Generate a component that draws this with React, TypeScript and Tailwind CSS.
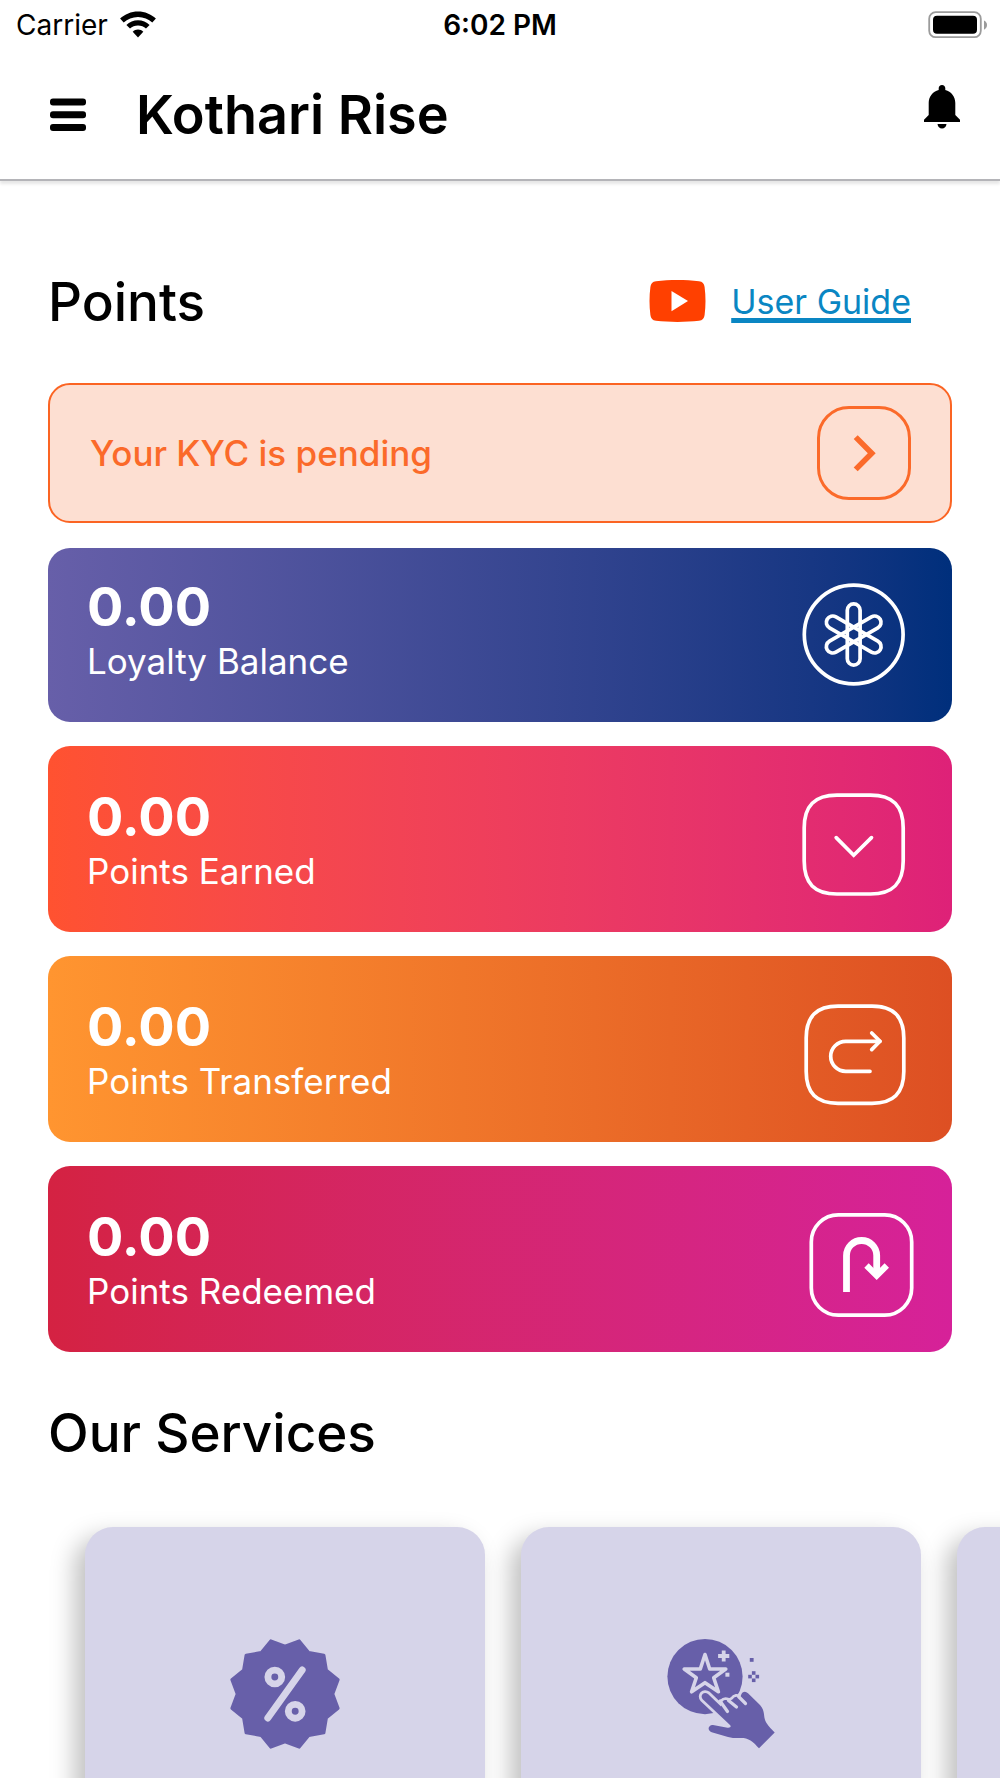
import type { ReactNode } from 'react';

interface PointsCardProps {
  value: string;
  label: string;
  className: string;
  icon: ReactNode;
}

function WifiIcon() {
  return (
    <svg width="36" height="28" viewBox="0 0 36 28" aria-hidden="true">
      <path d="M18 0.4C24.900 0.400 31.200 3.100 35.900 7.600L32.300 11.500C28.500 8 23.500 5.900 18 5.900S7.500 8 3.700 11.500L0.100 7.600C4.800 3.100 11.100 0.400 18 0.400Z" />
      <path d="M18 9.300C22.500 9.300 26.500 11 29.600 13.900L26 17.600C23.900 15.700 21.100 14.600 18 14.600S12.100 15.700 10 17.600L6.400 13.900C9.500 11 13.500 9.300 18 9.300Z" />
      <path d="M18 18.600C20 18.600 21.900 19.400 23.300 20.700L18 26.500L12.700 20.700C14.100 19.400 16 18.600 18 18.600Z" />
    </svg>
  );
}

function BatteryIcon() {
  return (
    <svg width="56" height="28" viewBox="0 0 56 28" className="overflow-visible" aria-hidden="true">
      <rect x="1.200" y="1.200" width="51.600" height="25" rx="6.500" fill="none" stroke="#9b9b9b" strokeWidth="1.800" />
      <rect x="5" y="4.800" width="44" height="18" rx="4" />
      <path d="M56 9.500C58 10.500 59 12 59 14S58 17.500 56 18.700Z" fill="#9b9b9b" />
    </svg>
  );
}

function MenuIcon() {
  return (
    <svg width="36" height="34" viewBox="0 0 36 34" aria-hidden="true">
      <rect y="0.500" width="36" height="7" rx="3" />
      <rect y="13.200" width="36" height="7" rx="3" />
      <rect y="25.900" width="36" height="7" rx="3" />
    </svg>
  );
}

function BellIcon() {
  return (
    <svg width="36" height="44" viewBox="0 0 36 44" aria-hidden="true">
      <path d="M18 0C20 0 21.300 1.400 21.300 3.200V4.900C27.200 6.300 31.300 11.600 31.300 18V30L36 34.700V37H0V34.700L4.700 30V18C4.700 11.600 8.800 6.300 14.700 4.900V3.200C14.700 1.400 16 0 18 0Z" />
      <path d="M13.500 39H22.500C22.200 41.800 20.400 43.500 18 43.500S13.800 41.800 13.500 39Z" />
    </svg>
  );
}

function VideoIcon() {
  return (
    <svg width="57" height="42" viewBox="0 0 57 42" aria-hidden="true">
      <path
        d="M7 1.200C20 -0.300 37 -0.300 50 1.200C53.500 1.600 55.200 3.500 55.600 7C56.800 16.500 56.800 25.500 55.600 35C55.200 38.500 53.500 40.400 50 40.800C37 42.300 20 42.300 7 40.800C3.500 40.400 1.800 38.500 1.400 35C0.200 25.500 0.200 16.500 1.400 7C1.800 3.500 3.500 1.600 7 1.200Z"
        fill="#ff4000"
      />
      <path d="M22.500 11L39 21.100L22.500 31.300Z" fill="#fff" />
    </svg>
  );
}

function FlowerIcon() {
  return (
    <svg width="112" height="104" viewBox="0 0 112 104" fill="none" stroke="#fff" strokeWidth="3.700" aria-hidden="true">
      <circle cx="51.700" cy="51.500" r="49.400" />
      {[0, 60, -60].map((angle) => (
        <rect key={angle} x="45.300" y="20.900" width="12.800" height="61.200" rx="6.400" transform={`rotate(${angle} 51.700 51.500)`} />
      ))}
    </svg>
  );
}

function EarnedIcon() {
  return (
    <svg width="112" height="104" viewBox="0 0 112 104" fill="none" stroke="#fff" strokeWidth="3.700" strokeLinecap="round" aria-hidden="true">
      <path d="M35 2.100H68.500C91 2.100 101.200 12.500 101.200 35V68C101.200 90.500 91 101 68.500 101H35C12.500 101 2.200 90.500 2.200 68V35C2.200 12.500 12.500 2.100 35 2.100Z" />
      <path d="M34.200 44.600L51.700 62.200L69.500 44.600" />
    </svg>
  );
}

function TransferredIcon() {
  return (
    <svg width="112" height="104" viewBox="0 0 112 104" fill="none" stroke="#fff" strokeWidth="3.700" strokeLinecap="round" strokeLinejoin="round" aria-hidden="true">
      <path d="M36 3.200H70C91.500 3.200 101.800 13.500 101.800 35V68.500C101.800 90 91.500 100.300 70 100.300H36C14.500 100.300 4.200 90 4.200 68.500V35C4.200 13.500 14.500 3.200 36 3.200Z" />
      <path d="M68 68.300H43.700A15 15 0 0 1 43.700 38.300H78" />
      <path d="M69.700 30L78 38.300L69.700 46.600" />
    </svg>
  );
}

function RedeemedIcon() {
  return (
    <svg width="112" height="104" viewBox="0 0 112 104" fill="none" stroke="#fff" aria-hidden="true">
      <rect x="9.300" y="1.900" width="100.400" height="100.200" rx="27" strokeWidth="3.700" />
      <path d="M44.500 79V42.600A15.100 15.100 0 0 1 74.700 42.600V60" strokeWidth="6.800" />
      <path d="M62.300 54.700L66.700 50.300L74.700 58.300L82.600 50.300L87 54.700L74.700 67Z" fill="#fff" stroke="none" />
    </svg>
  );
}

// Twelve-toothed seal around the percent sign
const sealPoints = Array.from({ length: 24 }, (_, i) => {
  const radius = i % 2 === 0 ? 47.800 : 55;
  const angle = (i * 15 * Math.PI) / 180;
  return `${55 + radius * Math.sin(angle)},${55 - radius * Math.cos(angle)}`;
}).join(' ');

function OfferIcon() {
  return (
    <svg width="110" height="110" viewBox="0 0 110 110" aria-hidden="true">
      <polygon points={sealPoints} fill="#675fa9" stroke="#675fa9" strokeWidth="3" strokeLinejoin="round" />
      <g fill="none" stroke="#d6d4e9" strokeWidth="6.900" strokeLinecap="round">
        <circle cx="44.800" cy="38" r="6.900" />
        <circle cx="65.200" cy="72.300" r="6.900" />
        <path d="M72.200 31L37.800 79" />
      </g>
    </svg>
  );
}

function RewardIcon() {
  const hand =
    'M35.700 60.300C32.500 56.500 37 51.800 41 55L54 67.500L55.500 62.500C57 60.500 60 60.500 62 62.500L66 60C67.500 57.500 70.500 57 73 59L74.500 55C76 52.300 78.700 52 81 54.300L93 66C99 73 95.500 77.500 99.500 84C101.500 87.500 105 90.500 107.700 93.600L92 109.300C88.500 106 86 102 79 99.600C75 98.300 68 100 61 98L44.700 93.300C39.500 91.500 41.500 85.500 46 86L60.500 88.700C63.500 89 64.500 87.500 63 86Z';
  return (
    <svg width="108" height="110" viewBox="0 0 108 110" aria-hidden="true">
      <circle cx="38" cy="37.600" r="37.600" fill="#675fa9" />
      <path
        d="M38 15.500L42.700 30H58.800L46.700 38.800L51.400 52.800L38 43.700L24.600 52.800L29.300 38.800L17.200 30H33.300Z"
        fill="none"
        stroke="#d6d4e9"
        strokeWidth="3.600"
        strokeLinejoin="round"
      />
      <path d="M56.700 11.400V22.600M51.100 17H62.300" stroke="#d6d4e9" strokeWidth="3.800" />
      <rect x="58.400" y="33.700" width="4" height="4" fill="#d6d4e9" />
      <path d={hand} fill="#675fa9" stroke="#d6d4e9" strokeWidth="5.600" strokeLinejoin="round" />
      <path d={hand} fill="#675fa9" />
      <path d="M53 62L60.500 72.500M61.500 61.500L69.500 68M71.500 57.500L78.500 64.500" stroke="#d6d4e9" strokeWidth="3.200" strokeLinecap="round" />
      <g fill="#675fa9">
        <rect x="82.800" y="19" width="3.800" height="3.800" />
        <rect x="84.900" y="32.200" width="3.600" height="3.600" />
        <rect x="84.900" y="39.500" width="3.600" height="3.600" />
        <rect x="81.200" y="35.800" width="3.600" height="3.600" />
        <rect x="88.500" y="35.800" width="3.600" height="3.600" />
      </g>
    </svg>
  );
}

function PointsCard({ value, label, className, icon }: PointsCardProps) {
  return (
    <div className={`flex items-start justify-between rounded-[22px] bg-linear-to-r pr-[38px] pb-[35px] pl-[39px] text-white ${className}`}>
      <div>
        <p className="text-[54px] leading-[62px] font-bold">{value}</p>
        <p className="text-[35px] leading-[46px]">{label}</p>
      </div>
      <div className="mt-[7px] shrink-0">{icon}</div>
    </div>
  );
}

const cards: PointsCardProps[] = [
  { value: '0.00', label: 'Loyalty Balance', className: 'from-[#675fa9] to-[#002f7c] pt-7', icon: <FlowerIcon /> },
  { value: '0.00', label: 'Points Earned', className: 'from-[#ff5230] to-[#de2178] pt-10', icon: <EarnedIcon /> },
  { value: '0.00', label: 'Points Transferred', className: 'from-[#ff9530] to-[#dd4f23] pt-10', icon: <TransferredIcon /> },
  { value: '0.00', label: 'Points Redeemed', className: 'from-[#d42242] to-[#d62199] pt-10', icon: <RedeemedIcon /> },
];

const services = [
  { name: 'Offers', icon: <OfferIcon /> },
  { name: 'Rewards', icon: <RewardIcon /> },
  { name: 'More', icon: null },
];

export default function App() {
  return (
    <div className="flex h-screen flex-col overflow-hidden bg-white font-['Inter',sans-serif] text-black">
      {/* Status bar */}
      <div className="grid h-[50px] shrink-0 grid-cols-3 items-center px-4 text-[28px]">
        <div className="flex items-center gap-3">
          <span>Carrier</span>
          <WifiIcon />
        </div>
        <span className="text-center font-semibold">6:02 PM</span>
        <div className="flex justify-end">
          <BatteryIcon />
        </div>
      </div>

      {/* Header */}
      <header className="flex h-[131px] shrink-0 items-center border-b-2 border-[#b4b4b8] pr-10 pl-[50px] shadow-[0_3px_3px_rgba(0,0,0,0.1)]">
        <button type="button" aria-label="Menu">
          <MenuIcon />
        </button>
        <h1 className="ml-[50px] flex-1 text-[54px] leading-[64px] font-semibold">Kothari Rise</h1>
        <button type="button" aria-label="Notifications" className="mb-4">
          <BellIcon />
        </button>
      </header>

      <main className="min-h-0 flex-1 overflow-y-auto [scrollbar-width:none]">
        <section className="px-12 pt-[88px]">
          <div className="flex items-center justify-between pr-[41px]">
            <h2 className="text-[53px] leading-[66px] font-medium">Points</h2>
            <a href="#guide" className="flex items-center gap-[25px] pb-0.5 text-[34px] text-[#0a86c3]">
              <VideoIcon />
              <span className="underline decoration-[5px] underline-offset-4">User Guide</span>
            </a>
          </div>

          {/* KYC notice */}
          <div className="mt-12 flex h-[140px] items-center justify-between rounded-[22px] border-2 border-[#fb6423] bg-[#fddfd2] pr-[39px] pl-10">
            <p className="text-[35px] font-medium text-[#fb6a2a]">Your KYC is pending</p>
            <button type="button" aria-label="Complete KYC" className="rounded-[32px] border-[3px] border-[#fb6a2a]">
              <svg width="88" height="88" viewBox="-1 -1 88 88" aria-hidden="true">
                <path d="M32.700 29L36.700 25.300L54.700 43.300L36.700 61.300L32.700 57.600L46.800 43.300Z" fill="#fb6a2a" />
              </svg>
            </button>
          </div>

          <div className="mt-[25px] flex flex-col gap-6">
            {cards.map((card) => (
              <PointsCard key={card.label} {...card} />
            ))}
          </div>

          <h2 className="mt-12 text-[53px] leading-[66px] font-medium">Our Services</h2>
        </section>

        {/* Services carousel */}
        <section className="flex gap-9 overflow-x-auto pt-[61px] pb-10 pl-[85px] [scrollbar-width:none]">
          {services.map((service) => (
            <button
              key={service.name}
              type="button"
              aria-label={service.name}
              className="flex h-[400px] w-[400px] shrink-0 justify-center rounded-[28px] bg-[#d6d4e9] pt-28 shadow-[-10px_10px_24px_rgba(0,0,0,0.25)]"
            >
              {service.icon}
            </button>
          ))}
        </section>
      </main>
    </div>
  );
}
